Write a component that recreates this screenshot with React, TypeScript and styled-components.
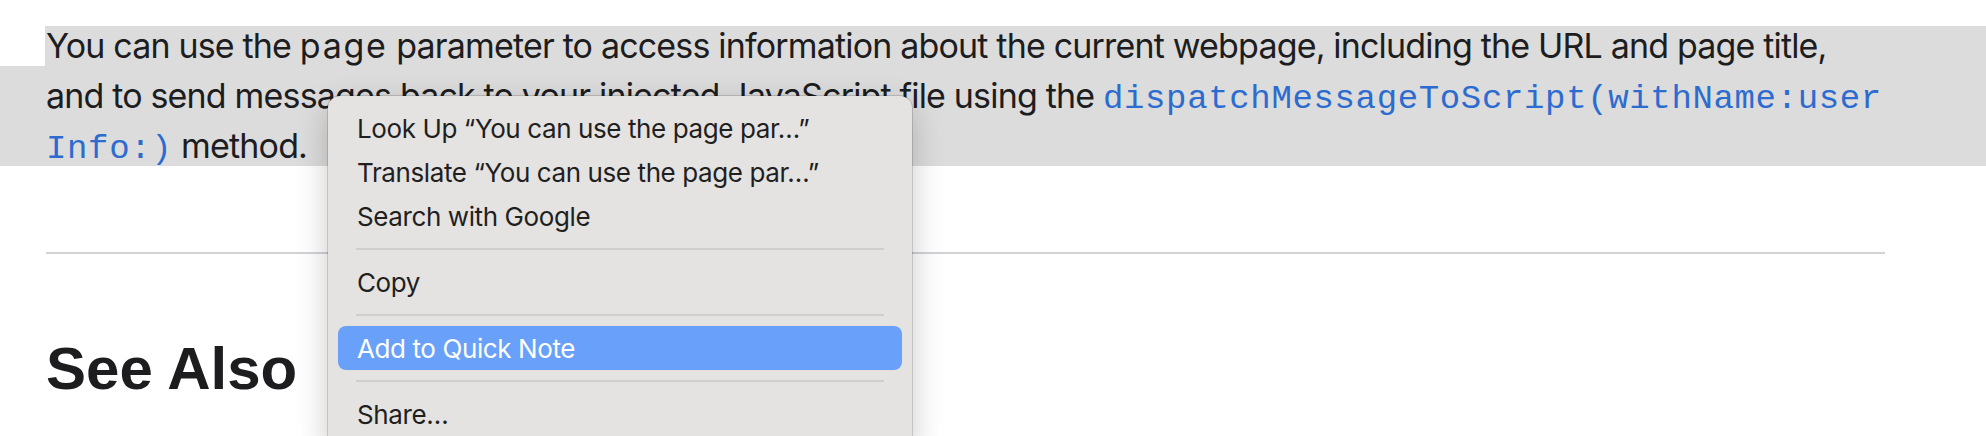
import React from "react";
import styled, { createGlobalStyle } from "styled-components";

const Global = createGlobalStyle`
  html, body {
    margin: 0;
    padding: 0;
    background: #ffffff;
    overflow: hidden;
  }
`;

const Page = styled.main`
  position: relative;
  width: 1986px;
  height: 436px;
  overflow: hidden;
  box-sizing: border-box;
  padding: 21px 101px 0 46px;
  font-family: Inter, "Noto Sans", sans-serif;
  color: #1d1d1f;
`;

const Paragraph = styled.p`
  position: relative;
  isolation: isolate;
  margin: 0;
  font-size: 34px;
  line-height: 50px;
  letter-spacing: -0.83px;
  white-space: nowrap;

  &::before {
    content: "";
    position: absolute;
    z-index: -1;
    left: -1px;
    right: -101px;
    top: 5px;
    height: 40px;
    background: #dcdcdc;
  }

  &::after {
    content: "";
    position: absolute;
    z-index: -1;
    left: -46px;
    right: -101px;
    top: 45px;
    height: 100px;
    background: #dcdcdc;
  }
`;

const Spaced = styled.span`
  letter-spacing: 0.05em;
`;

const Code = styled.code`
  font-family: "Liberation Mono", "DejaVu Sans Mono", monospace;
  font-size: 34px;
  line-height: 1;
  letter-spacing: 0.65px;
  color: #2c6bcf;
`;

const Rule = styled.hr`
  margin: 81px 0 0;
  border: 0;
  height: 2px;
  background: #d2d2d7;
`;

const Heading = styled.h2`
  margin: 82px 0 0;
  font-family: "Liberation Sans", Arial, sans-serif;
  font-weight: 700;
  font-size: 60px;
  line-height: 66px;
  color: #1d1d1f;
`;

const Menu = styled.div`
  position: absolute;
  left: 328px;
  top: 96px;
  width: 584px;
  padding: 10px 0 12px;
  background: #e4e3e1;
  border-radius: 12px;
  box-shadow: 0 0 0 1px rgba(0, 0, 0, 0.14), 0 10px 32px rgba(0, 0, 0, 0.22);
  font-family: Inter, "Noto Sans", sans-serif;
  font-size: 26px;
  letter-spacing: -0.4px;
`;

const Item = styled.div<{ $active?: boolean }>`
  display: flex;
  align-items: center;
  height: 44px;
  margin: 0 10px;
  padding: 0 19px;
  border-radius: 8px;
  white-space: nowrap;
  background: ${(p) => (p.$active ? "#69a0f9" : "transparent")};
  color: ${(p) => (p.$active ? "#ffffff" : "#1f1f1f")};
`;

const Separator = styled.div`
  display: flex;
  align-items: center;
  height: 22px;
  padding: 0 28px;

  &::before {
    content: "";
    flex: 1;
    height: 2px;
    background: #cfcecc;
  }
`;

export default function App() {
  return (
    <>
      <Global />
      <Page>
        <Paragraph>
          You can use the <Spaced>page</Spaced> parameter to access information about the current webpage, including the URL and page title,
          <br />
          and to send messages back to your injected JavaScript file using the{" "}
          <Code>dispatchMessageToScript(withName:user</Code>
          <br />
          <Code>Info:)</Code> method.
        </Paragraph>
        <Rule />
        <Heading>See Also</Heading>
        <Menu>
          <Item>Look Up “You can use the page par…”</Item>
          <Item>Translate “You can use the page par…”</Item>
          <Item>Search with Google</Item>
          <Separator />
          <Item>Copy</Item>
          <Separator />
          <Item $active>Add to Quick Note</Item>
          <Separator />
          <Item>Share…</Item>
        </Menu>
      </Page>
    </>
  );
}
